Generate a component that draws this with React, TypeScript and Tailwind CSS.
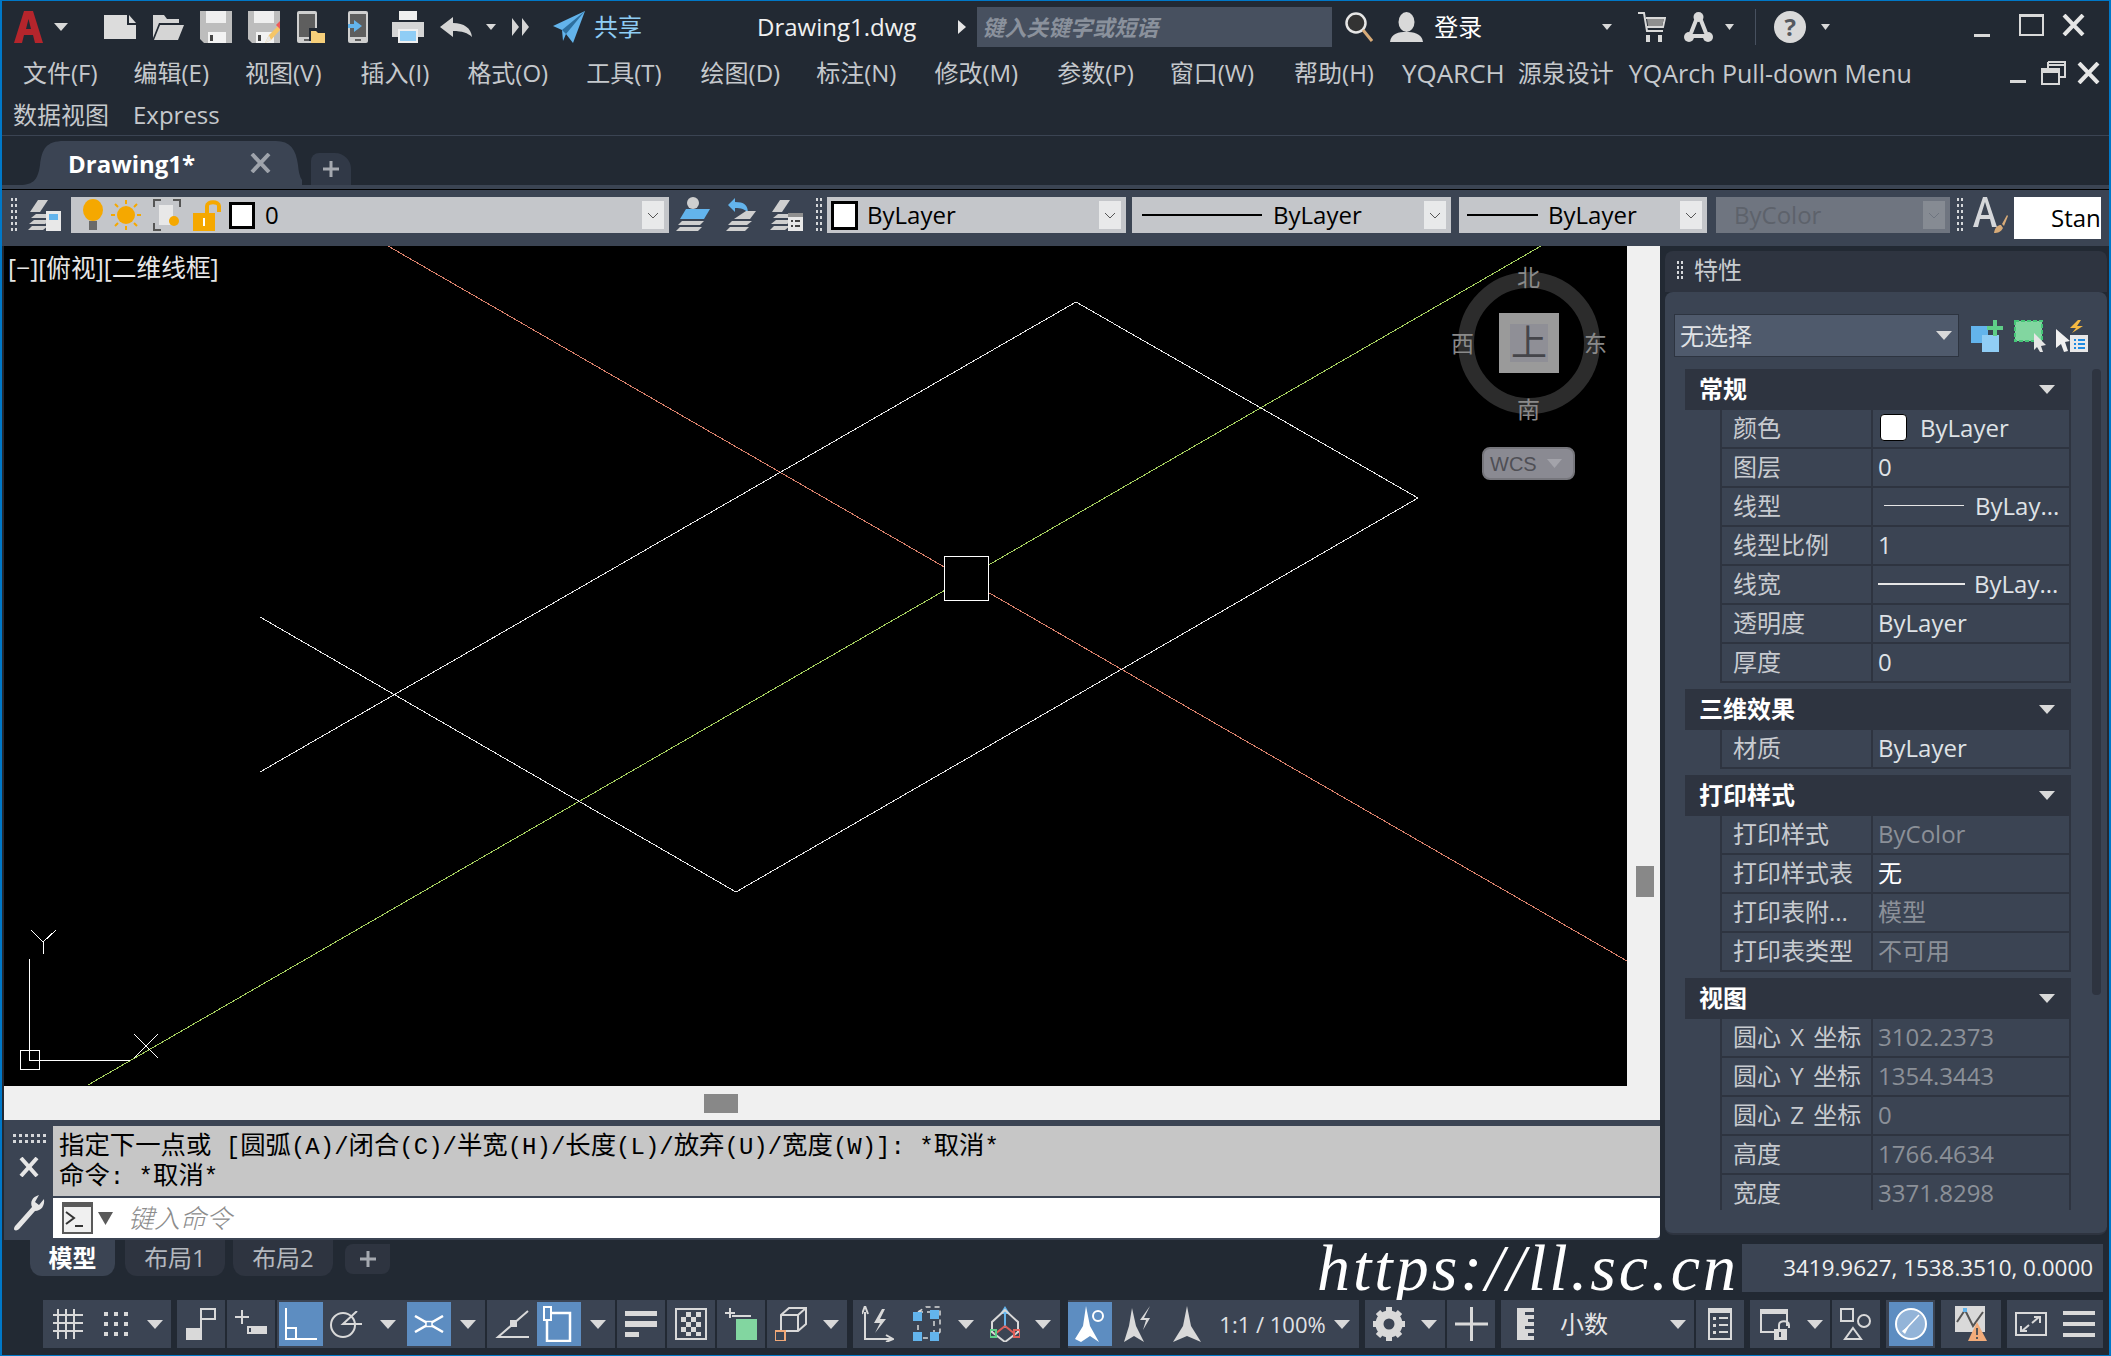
import { ReactNode } from "react";

const LIGHT = "#d9d9d9";

type SvgProps = { w: number; h: number; className?: string; children: ReactNode };

function Svg({ w, h, className, children }: SvgProps) {
  return (
    <svg width={w} height={h} viewBox={`0 0 ${w} ${h}`} className={`shrink-0 ${className ?? ""}`}>
      {children}
    </svg>
  );
}

function Tri({ w = 16, h = 9, color = LIGHT, className }: { w?: number; h?: number; color?: string; className?: string }) {
  return (
    <Svg w={w} h={h} className={className}>
      <polygon points={`0,0 ${w},0 ${w / 2},${h}`} fill={color} />
    </Svg>
  );
}

function Grip({ className }: { className?: string }) {
  const dots = [0, 6, 12, 18, 24, 30];
  return (
    <Svg w={7} h={34} className={className}>
      {dots.map((y) => (
        <g key={y} fill="#d5d7da">
          <rect x={0} y={y} width={2} height={3} />
          <rect x={4} y={y} width={2} height={3} />
        </g>
      ))}
    </Svg>
  );
}

function Floppy({ pencil }: { pencil?: boolean }) {
  return (
    <Svg w={32} h={32}>
      <path d="M0 0H32V32H4L0 28Z" fill="#bdbdbd" />
      <rect x={6} y={0} width={20} height={12} fill="#efefef" />
      <rect x={8} y={21} width={18} height={11} fill="#f2f2f2" />
      <rect x={10} y={24} width={3} height={6} fill="#444" />
      {pencil && (
        <g>
          <path d="M17 32L21 24L30 15L32 19L23 29Z" fill="#f6c667" />
          <path d="M28 14L32 10L32 18Z" fill="#ee5a5a" />
          <path d="M17 32L21 24L23 29Z" fill="#e8e8e8" />
        </g>
      )}
    </Svg>
  );
}

function Phone({ w = 24, children }: { w?: number; children?: ReactNode }) {
  return (
    <Svg w={w} h={32}>
      <rect x={0} y={0} width={20} height={32} rx={2} fill="#cfcfcf" />
      <rect x={2} y={3} width={16} height={23} fill="#5e5e5e" />
      <rect x={7} y={28} width={6} height={2} fill="#5e5e5e" />
      {children}
    </Svg>
  );
}

function LayerStack({ children }: { children?: ReactNode }) {
  return (
    <Svg w={34} h={34}>
      <path d="M10 3H20L12 15H2Z" fill="#cfcfcf" />
      <path d="M8 17H24L19 21H3Z" fill="#cfcfcf" />
      <path d="M6 23H22L17 27H1Z" fill="#cfcfcf" />
      <path d="M4 29H20L15 33H0Z" fill="#cfcfcf" />
      {children}
    </Svg>
  );
}

function Combo({ className, children }: { className: string; children: ReactNode }) {
  return <div className={`relative flex h-9 shrink-0 items-center text-black ${className}`}>{children}</div>;
}

function Dd({ muted }: { muted?: boolean }) {
  return (
    <div className={`ml-auto mr-[5px] flex h-7 w-[22px] items-center justify-center ${muted ? "bg-[#868b93]" : "bg-[#e8e9ea]"}`}>
      <Svg w={12} h={7}>
        <path d="M1 1L6 6L11 1" fill="none" stroke={muted ? "#6f7580" : "#555"} strokeWidth={1} />
      </Svg>
    </div>
  );
}

function Menu({ label, className }: { label: string; className: string }) {
  return <span className={`shrink-0 whitespace-nowrap ${className}`}>{label}</span>;
}

// command line glyphs: the han text sits a bit larger than the mono latin
function CmdLine({ text }: { text: string }) {
  const parts = text.split(/([\u4e00-\u9fff]+)/);
  return (
    <div className="h-[30px] whitespace-pre">
      {parts.map((part, i) => (
        <span key={i} className={i % 2 === 1 ? "text-[25.4px]" : ""}>
          {part}
        </span>
      ))}
    </div>
  );
}

type Row = { label: string; value?: ReactNode; tone?: "on" | "off" | "white" };

function Section({ title, rows }: { title: string; rows: Row[] }) {
  return (
    <div className="mb-[6px] w-[386px]">
      <div className="flex h-[41px] items-center justify-between bg-[#2e3440] pl-[14px] pr-4 text-[24px] font-bold text-white">
        <span className="mb-[2px]">{title}</span>
        <Tri />
      </div>
      {rows.map((row) => (
        <div key={row.label} className="ml-[35px] flex h-[39px] border-x-2 border-b-2 border-[#2e3440] text-[24px] leading-none">
          <div className="flex w-[151px] items-center whitespace-nowrap border-r-2 border-[#2e3440] pb-[2px] pl-[11px] text-[#c8cbd0] [word-spacing:3px]">{row.label}</div>
          <div
            className={`flex flex-1 items-center pb-[2px] pl-[5px] ${
              row.tone === "off" ? "text-[#8b9098]" : row.tone === "white" ? "text-white" : "text-[#dfe2e6]"
            }`}
          >
            {row.value}
          </div>
        </div>
      ))}
    </div>
  );
}

function Slot({ className, children }: { className: string; children?: ReactNode }) {
  return <div className={`flex h-12 shrink-0 items-center justify-center ${className}`}>{children}</div>;
}

function Active({ children }: { children: ReactNode }) {
  return <div className="flex h-11 w-11 shrink-0 items-center justify-center bg-[#5d8dc1]">{children}</div>;
}

function Group({ className, children }: { className: string; children: ReactNode }) {
  return <div className={`flex h-12 shrink-0 items-center bg-[#3b4453] ${className}`}>{children}</div>;
}

function Canvas() {
  return (
    <div className="relative h-[840px] w-[1623px] shrink-0 overflow-hidden bg-black">
      <svg width={1623} height={840} viewBox="4 246 1623 840" shapeRendering="crispEdges" className="block">
        <line x1={388} y1={246} x2={1627} y2={961} stroke="#d9806a" />
        <line x1={1541} y1={246} x2={88} y2={1085} stroke="#a5d05f" />
        <polyline points="260,772 1076,302 1418,498 736,892 260,617" fill="none" stroke="#e6e6e6" />
        <rect x={944.5} y={556.5} width={44} height={44} fill="#000" stroke="#fff" />
        <g fill="none" stroke="#fff">
          <path d="M31 930L43 942L56 930M43 942V954" />
          <path d="M29 959V1060H130" />
          <rect x={20.5} y={1050.5} width={19} height={19} />
          <path d="M134 1034L158 1058M158 1034L134 1058" />
        </g>
      </svg>
      <span className="absolute left-[4px] top-[10px] text-[24.7px] leading-none text-[#e6e6e6]">[−][俯视][二维线框]</span>

      {/* viewcube */}
      <div className="absolute left-[1454px] top-[26px] h-[142px] w-[142px] rounded-full border-[16px] border-[#2c2c2c]" />
      <div className="absolute left-[1495px] top-[67px] flex h-[60px] w-[60px] items-center justify-center bg-[#9a9a9a]">
        <div className="flex h-[38px] w-[38px] items-center justify-center bg-[#8f8f96] text-[36px] leading-none text-[#45454a]">上</div>
      </div>
      <span className="absolute left-[1513px] top-[20px] text-[23px] leading-none text-[#8a8a8a]">北</span>
      <span className="absolute left-[1513px] top-[152px] text-[23px] leading-none text-[#8a8a8a]">南</span>
      <span className="absolute left-[1447px] top-[86px] text-[23px] leading-none text-[#8a8a8a]">西</span>
      <span className="absolute left-[1580px] top-[86px] text-[23px] leading-none text-[#8a8a8a]">东</span>
      <div className="absolute left-[1478px] top-[201px] flex h-[33px] w-[93px] items-center gap-[10px] rounded-lg border-2 border-[#76767c] bg-[#8a8a92] pl-[6px] font-['Liberation_Sans',sans-serif] text-[20px] leading-none text-[#4f4f55]">
        WCS
        <Tri w={15} h={9} color="#a3a3aa" />
      </div>
    </div>
  );
}

export default function App() {
  return (
    <div className="flex h-[1356px] w-[2111px] flex-col overflow-hidden border-x-2 border-y border-x-[#0078c8] border-y-[#0078c8] bg-[#222933] font-['Open_Sans','Noto_Sans_CJK_SC',sans-serif] text-[24px] leading-none text-[#c5c8cc]">
      {/* title bar */}
      <div className="flex h-[54px] shrink-0 items-center pb-[2px]">
        <Svg w={29} h={32} className="ml-[12px]">
          <path d="M0 32L10 0H19L29 32H21L19 24H10L8 32ZM12 18H17L14.5 8Z" fill="#b5252c" fillRule="evenodd" />
        </Svg>
        <Tri w={14} h={8} className="ml-[11px]" />
        <Svg w={32} h={24} className="ml-[36px]">
          <path d="M0 0H23V10H32V24H0Z" fill="#dcdcdc" />
          <path d="M25 0L32 8H25Z" fill="#dcdcdc" />
        </Svg>
        <Svg w={32} h={26} className="ml-4">
          <path d="M1 24V1H12L15 5H27V9H7L1 24Z" fill="#d5d5d5" />
          <path d="M8 11H32L26 26H2Z" fill="#d5d5d5" />
        </Svg>
        <div className="ml-4"><Floppy /></div>
        <div className="ml-4"><Floppy pencil /></div>
        <div className="ml-[17px]">
          <Phone w={30}>
            <rect x={12} y={17} width={18} height={13} fill="#222933" />
            <path d="M14 32V20H19L21 22H28V32Z" fill="#f6cf7a" />
          </Phone>
        </div>
        <div className="ml-[21px]">
          <Phone w={20}>
            <path d="M-6 13H6V9L14 15L6 21V17H-6Z" fill="#63b4ec" />
          </Phone>
        </div>
        <Svg w={32} h={32} className="ml-6">
          <rect x={7} y={0} width={18} height={9} fill="#efefef" />
          <rect x={0} y={11} width={32} height={15} fill="#d5d5d5" />
          <rect x={6} y={18} width={20} height={14} fill="#efefef" />
          <rect x={8} y={20} width={16} height={10} fill="#90cdf5" />
        </Svg>
        <Svg w={32} h={20} className="ml-4">
          <path d="M0 10L13 0V6C24 6 31 11 32 20C28 16 22 14 13 14V20Z" fill="#d5d5d5" />
        </Svg>
        <Tri w={10} h={6} className="ml-[14px]" />
        <Svg w={18} h={18} className="ml-4">
          <path d="M0 0L7 9L0 18ZM10 0L17 9L10 18Z" fill="#d5d5d5" />
        </Svg>
        <Svg w={32} h={32} className="ml-[23px]">
          <path d="M32 0L20 32L13 23L10 30L9 19L0 15Z" fill="#63b4ec" />
          <path d="M32 0L9 19L13 23Z" fill="#2d6f9f" />
        </Svg>
        <span className="ml-[9px] text-[#8fcdf5]">共享</span>
        <span className="ml-[115px] text-[#f0f0f0]">Drawing1.dwg</span>
        <Svg w={8} h={14} className="ml-[42px]">
          <path d="M0 0L8 7L0 14Z" fill="#e6e6e6" />
        </Svg>
        <div className="ml-[11px] flex h-10 w-[355px] items-center bg-[#47505f] pl-[5px] text-[22px] font-bold italic text-[#8a919c]">键入关键字或短语</div>
        <Svg w={28} h={30} className="ml-[13px]">
          <circle cx={11} cy={11} r={9.5} fill="#333" stroke="#e6e6e6" strokeWidth={2.5} />
          <path d="M18 18L27 29" stroke="#d8ab78" strokeWidth={3} />
        </Svg>
        <Svg w={33} h={30} className="ml-[17px]">
          <ellipse cx={16.5} cy={10} rx={8} ry={10} fill={LIGHT} />
          <path d="M0 30C1 21 9 20 16 20S32 21 33 30Z" fill={LIGHT} />
        </Svg>
        <span className="ml-[11px] text-white">登录</span>
        <Tri w={10} h={6} className="ml-[120px]" />
        <Svg w={28} h={30} className="ml-[26px]">
          <path d="M0 1H6L9 19H25M8 6H27L25 15H9" fill="none" stroke={LIGHT} strokeWidth={2} />
          <path d="M9 7H26L24 14H10Z" fill="#8f8f8f" />
          <path d="M8 23H12V30H8ZM20 23H24V30H20Z" fill={LIGHT} />
        </Svg>
        <Svg w={31} h={30} className="ml-[17px]">
          <path d="M15.5 2L8 21M15.5 2L23 21M6 24H25" fill="none" stroke={LIGHT} strokeWidth={4} />
          <circle cx={6} cy={25} r={5} fill={LIGHT} />
          <circle cx={25} cy={25} r={5} fill={LIGHT} />
          <circle cx={15.5} cy={5} r={5} fill={LIGHT} />
        </Svg>
        <Tri w={9} h={6} className="ml-[11px]" />
        <div className="ml-[21px] h-9 w-px bg-[#47505f]" />
        <div className="ml-[18px] flex h-8 w-8 items-center justify-center rounded-full bg-[#d9d9d9] text-[24px] font-bold text-[#55585e]">?</div>
        <Tri w={9} h={6} className="ml-[15px]" />
        <div className="ml-[144px] mt-[16px] h-[3px] w-4 bg-[#d9d9d9]" />
        <div className="ml-[29px] mt-[-4px] h-[22px] w-[25px] border-2 border-t-[3px] border-[#d9d9d9]" />
        <Svg w={23} h={22} className="ml-[18px] mt-[-4px]">
          <path d="M2 1L21 21M21 1L2 21" stroke="#e6e6e6" strokeWidth={4} />
        </Svg>
      </div>

      {/* menus */}
      <div className="flex h-10 shrink-0 items-center pb-[4px]">
        <Menu label="文件(F)" className="ml-[21px]" />
        <Menu label="编辑(E)" className="ml-[36px]" />
        <Menu label="视图(V)" className="ml-[36px]" />
        <Menu label="插入(I)" className="ml-[39px]" />
        <Menu label="格式(O)" className="ml-[38px]" />
        <Menu label="工具(T)" className="ml-[38px]" />
        <Menu label="绘图(D)" className="ml-[39px]" />
        <Menu label="标注(N)" className="ml-[36px]" />
        <Menu label="修改(M)" className="ml-[38px]" />
        <Menu label="参数(P)" className="ml-[39px]" />
        <Menu label="窗口(W)" className="ml-[36px]" />
        <Menu label="帮助(H)" className="ml-10" />
        <Menu label="YQARCH" className="ml-[28px] text-[26px]" />
        <Menu label="源泉设计" className="ml-[13px]" />
        <Menu label="YQArch Pull-down Menu" className="ml-[15px] text-[25px]" />
        <div className="ml-auto flex items-center">
          <div className="mt-[16px] h-[3px] w-4 bg-[#d9d9d9]" />
          <Svg w={25} h={24} className="ml-[15px]">
            <path d="M7 1H24V16H18M7 1V7M7 4H24" fill="none" stroke="#d9d9d9" strokeWidth={2} />
            <rect x={1} y={8} width={17} height={15} fill="none" stroke="#d9d9d9" strokeWidth={2} />
            <rect x={1} y={8} width={17} height={4} fill="#d9d9d9" />
          </Svg>
          <Svg w={23} h={22} className="ml-[11px] mr-[9px]">
            <path d="M2 1L21 21M21 1L2 21" stroke="#e6e6e6" strokeWidth={4} />
          </Svg>
        </div>
      </div>
      <div className="flex h-10 shrink-0 items-center">
        <span className="ml-[11px]">数据视图</span>
        <span className="ml-6">Express</span>
      </div>
      <div className="h-px shrink-0 bg-[#3b4453]" />

      {/* file tabs */}
      <div className="flex h-[49px] shrink-0 items-end">
        <div className="relative ml-[18px] flex h-11 w-[282px] items-center">
          <svg width={282} height={44} viewBox="0 0 282 44" className="absolute inset-0">
            <path d="M0 44C14 44 18 38 20 24C22 8 26 0 44 0H256C270 0 276 8 278 24C279 36 282 44 292 44Z" fill="#3b4453" />
          </svg>
          <span className="relative ml-[48px] mt-[2px] font-bold text-white">Drawing1*</span>
          <Svg w={21} h={20} className="relative ml-[55px]">
            <path d="M2 1L19 19M19 1L2 19" stroke="#9ea3ab" strokeWidth={4} />
          </Svg>
        </div>
        <div className="ml-[9px] flex h-8 w-[40px] items-center justify-center rounded-tr-2xl rounded-tl-lg bg-[#313947]">
          <Svg w={16} h={16}>
            <path d="M8 0V16M0 8H16" stroke="#a5a9b0" strokeWidth={3} />
          </Svg>
        </div>
      </div>
      <div className="h-1 shrink-0 bg-[#3b4453]" />
      <div className="h-px shrink-0 bg-black" />

      {/* toolbar */}
      <div className="flex h-14 shrink-0 items-start bg-[#3b4453] pt-[7px]">
        <Grip className="ml-[9px] mt-[1px]" />
        <div className="ml-[10px]">
          <LayerStack>
            <rect x={18} y={14} width={15} height={20} fill="#e8e8e8" />
            <rect x={21} y={17} width={9} height={6} fill="#63b4ec" />
          </LayerStack>
        </div>
        <Combo className="ml-[9px] w-[598px] bg-[#c4c6ca]">
          <Svg w={20} h={32} className="ml-[12px]">
            <ellipse cx={10} cy={11} rx={10} ry={11} fill="#f5a800" />
            <rect x={6} y={22} width={8} height={9} fill="#6a6a6a" />
          </Svg>
          <Svg w={30} h={30} className="ml-2">
            <circle cx={15} cy={15} r={9} fill="#f5a800" />
            <path d="M15 0V4M15 26V30M0 15H4M26 15H30M4 4L7 7M23 23L26 26M26 4L23 7M7 23L4 26" stroke="#f5a800" strokeWidth={2} />
          </Svg>
          <Svg w={28} h={32} className="ml-3">
            <path d="M1 8V1H8M20 1H27V8M1 24V31H8" fill="none" stroke="#555" strokeWidth={2} />
            <rect x={6} y={6} width={14} height={20} fill="#e8e8e8" />
            <circle cx={21} cy={22} r={5} fill="#f5a800" />
          </Svg>
          <Svg w={30} h={32} className="ml-3">
            <path d="M14 14V7C14 2 26 2 26 7V13" fill="none" stroke="#f5a800" strokeWidth={4} />
            <rect x={0} y={14} width={22} height={18} fill="#f5a800" />
            <rect x={10} y={19} width={2} height={8} fill="#fff" />
          </Svg>
          <div className="ml-[6px] h-[27px] w-[26px] border-[3px] border-black bg-white" />
          <span className="ml-[10px]">0</span>
          <Dd />
        </Combo>
        <div className="ml-[7px]">
          <Svg w={34} h={34}>
            <circle cx={17} cy={6} r={6} fill="#cfcfcf" />
            <path d="M4 22L10 12H34L28 22Z" fill="#63b4ec" />
            <path d="M6 24H28L24 28H2ZM4 30H26L22 34H0Z" fill="#cfcfcf" />
          </Svg>
        </div>
        <div className="ml-[14px]">
          <Svg w={33} h={34}>
            <path d="M4 8L11 1V5C20 5 24 8 24 16C21 12 17 11 11 11V15Z" fill="#63b4ec" />
            <path d="M22 14H32L26 22H10ZM8 24H28L23 28H4ZM6 30H25L21 34H2Z" fill="#cfcfcf" />
          </Svg>
        </div>
        <div className="ml-[13px]">
          <LayerStack>
            <rect x={18} y={16} width={15} height={18} fill="#e8e8e8" />
            <rect x={18} y={16} width={15} height={4} fill="#8f8f8f" />
            <path d="M21 23H23V25H21ZM25 23H30V25H25ZM21 28H23V30H21ZM25 28H30V30H25Z" fill="#444" />
          </LayerStack>
        </div>
        <Grip className="ml-[12px] mt-[1px]" />
        <Combo className="ml-[4px] w-[299px] bg-[#c4c6ca]">
          <div className="ml-[4px] h-[29px] w-[27px] border-[3px] border-black bg-white" />
          <span className="ml-[9px]">ByLayer</span>
          <Dd />
        </Combo>
        <Combo className="ml-[6px] w-[319px] bg-[#c4c6ca]">
          <div className="ml-[10px] h-[2px] w-[120px] bg-black" />
          <span className="ml-[11px]">ByLayer</span>
          <Dd />
        </Combo>
        <Combo className="ml-2 w-[248px] bg-[#c4c6ca]">
          <div className="ml-2 h-[2px] w-[71px] bg-black" />
          <span className="ml-[10px]">ByLayer</span>
          <Dd />
        </Combo>
        <Combo className="ml-[9px] w-[234px] bg-[#6f7580]">
          <span className="ml-[18px] text-[#5d626b]">ByColor</span>
          <Dd muted />
        </Combo>
        <Grip className="ml-[7px] mt-[1px]" />
        <Svg w={42} h={36} className="ml-[9px]">
          <path d="M0 30L10 0H14L24 30H19L17 22H7L5 30ZM8 18H16L12 5Z" fill="#d5d7da" fillRule="evenodd" />
          <path d="M21 36C22 30 25 28 28 28L30 31C28 35 25 36 21 36ZM29 27L34 18L35 19L31 29Z" fill="#d8ab78" />
        </Svg>
        <div className="ml-[-1px] flex h-[42px] w-[87px] items-center overflow-hidden bg-white pl-[37px] text-black">Stan</div>
      </div>

      {/* main */}
      <div className="flex h-[994px] shrink-0">
        <div className="flex w-[1658px] shrink-0 flex-col pl-[2px]">
          <div className="flex h-[840px] shrink-0">
            <Canvas />
            <div className="flex flex-1 items-start bg-[#f0f0f0] pl-[9px] pt-[620px]">
              <div className="h-[31px] w-[18px] bg-[#888]" />
            </div>
          </div>
          <div className="flex h-[34px] shrink-0 items-center bg-[#f0f0f0] pl-[700px]">
            <div className="h-[19px] w-[34px] bg-[#888]" />
          </div>
          <div className="flex h-[120px] shrink-0 bg-[#3b4453] pt-[6px]">
            <div className="flex w-[49px] shrink-0 flex-col items-center pt-[8px]">
              <Svg w={36} h={10}>
                <path d="M2 0h3v3h-3zM8 0h3v3h-3zM14 0h3v3h-3zM20 0h3v3h-3zM26 0h3v3h-3zM32 0h3v3h-3zM2 6h3v3h-3zM8 6h3v3h-3zM14 6h3v3h-3zM20 6h3v3h-3zM26 6h3v3h-3zM32 6h3v3h-3z" fill="#d5d7da" />
              </Svg>
              <Svg w={20} h={20} className="mt-[13px]">
                <path d="M2 1L18 19M18 1L2 19" stroke="#e6e6e6" strokeWidth={4} />
              </Svg>
              <Svg w={32} h={36} className="mt-[18px]">
                <path d="M1 34C1 32 2 31 3 30L19 12C17 7 19 2 26 0L22 7L26 10L31 4C32 11 28 16 22 16L7 33C5 36 1 36 1 34Z" fill="#e6e6e6" />
              </Svg>
            </div>
            <div className="flex flex-1 flex-col">
              <div className="h-[70px] bg-[#c6c6c6] pl-[6px] pt-[7px] font-['Liberation_Mono','Noto_Sans_CJK_SC',monospace] text-[24px] leading-[30px] text-black">
                <CmdLine text="指定下一点或 [圆弧(A)/闭合(C)/半宽(H)/长度(L)/放弃(U)/宽度(W)]: *取消*" />
                <CmdLine text="命令: *取消*" />
              </div>
              <div className="mt-[2px] flex h-10 items-center rounded-br bg-white pl-[9px]">
                <Svg w={32} h={32}>
                  <rect x={0} y={0} width={31} height={32} fill="#5a5a5a" />
                  <rect x={2} y={5} width={27} height={25} fill="#f0f0f0" />
                  <path d="M4 10L12 16L4 22" fill="none" stroke="#333" strokeWidth={2} />
                  <path d="M13 24H21" stroke="#333" strokeWidth={2} />
                </Svg>
                <Tri w={15} h={13} color="#5a5a5a" className="ml-[4px]" />
                <span className="ml-[15px] text-[26px] font-light italic text-[#8c8c8c]">键入命令</span>
              </div>
            </div>
          </div>
        </div>

        {/* properties */}
        <div className="ml-[5px] mt-[5px] flex h-[984px] w-[442px] shrink-0 flex-col">
          <div className="flex h-[41px] shrink-0 items-center rounded-t-lg bg-[#2e3440] pb-[4px] pl-[12px]">
            <Svg w={7} h={18}>
              <path d="M0 0h2v3h-2zM4 0h2v3h-2zM0 5h2v3h-2zM4 5h2v3h-2zM0 10h2v3h-2zM4 10h2v3h-2zM0 15h2v3h-2zM4 15h2v3h-2z" fill="#d5d7da" />
            </Svg>
            <span className="ml-[10px] text-[#c9ccd0]">特性</span>
          </div>
          <div className="flex h-[943px] flex-col rounded-lg border-b-2 border-[#2e3440] bg-[#3b4453] pt-[22px]">
            <div className="flex h-[43px] shrink-0 items-center pl-[9px]">
              <div className="flex h-[43px] w-[285px] items-center justify-between border border-[#2d3440] bg-[#4f5a6c] pl-[5px] pr-[6px] text-[#e0e2e5]">
                无选择
                <Tri />
              </div>
              <Svg w={33} h={32} className="ml-3">
                <rect x={0} y={6} width={17} height={17} fill="#63b4ec" />
                <rect x={11} y={15} width={17} height={17} fill="#90cdf5" />
                <path d="M24 0V16M16 8H32" stroke="#5fce88" strokeWidth={4} />
              </Svg>
              <Svg w={32} h={32} className="ml-[10px]">
                <rect x={1} y={1} width={27} height={20} fill="#82d6a0" stroke="#46c678" strokeWidth={2} strokeDasharray="4 2" />
                <path d="M20 13L32 25L27 26L29 32H26L23 27L20 30Z" fill="#e6e6e6" />
              </Svg>
              <Svg w={32} h={32} className="ml-[10px]">
                <path d="M0 9L14 21L9 22L12 31L8 32L5 24L0 28Z" fill="#f0f0f0" />
                <path d="M22 0L14 8H20L16 13L27 6H21L25 0Z" fill="#f5b942" />
                <rect x={14} y={15} width={18} height={17} fill="#e8e8e8" />
                <path d="M18 19h2v2h-2zM22 19h7v2h-7zM18 23h2v2h-2zM22 23h7v2h-7zM18 27h2v2h-2zM22 27h7v2h-7z" fill="#1d8ae0" />
              </Svg>
            </div>
            <div className="mt-3 flex h-[841px] overflow-hidden pl-5">
              <div className="w-[386px]">
                <Section
                  title="常规"
                  rows={[
                    {
                      label: "颜色",
                      value: (
                        <>
                          <span className="ml-[2px] h-[27px] w-[27px] rounded-sm border border-black bg-white" />
                          <span className="ml-[13px]">ByLayer</span>
                        </>
                      ),
                    },
                    { label: "图层", value: "0" },
                    {
                      label: "线型",
                      value: (
                        <>
                          <span className="ml-[6px] h-px w-[80px] shrink-0 bg-[#e6e6e6]" />
                          <span className="ml-[11px] whitespace-nowrap">ByLay...</span>
                        </>
                      ),
                    },
                    { label: "线型比例", value: "1" },
                    {
                      label: "线宽",
                      value: (
                        <>
                          <span className="h-[2px] w-[87px] shrink-0 bg-[#e6e6e6]" />
                          <span className="ml-[9px] whitespace-nowrap">ByLay...</span>
                        </>
                      ),
                    },
                    { label: "透明度", value: "ByLayer" },
                    { label: "厚度", value: "0" },
                  ]}
                />
                <Section title="三维效果" rows={[{ label: "材质", value: "ByLayer" }]} />
                <Section
                  title="打印样式"
                  rows={[
                    { label: "打印样式", value: "ByColor", tone: "off" },
                    { label: "打印样式表", value: "无", tone: "white" },
                    { label: "打印表附...", value: "模型", tone: "off" },
                    { label: "打印表类型", value: "不可用", tone: "off" },
                  ]}
                />
                <Section
                  title="视图"
                  rows={[
                    { label: "圆心 X 坐标", value: "3102.2373", tone: "off" },
                    { label: "圆心 Y 坐标", value: "1354.3443", tone: "off" },
                    { label: "圆心 Z 坐标", value: "0", tone: "off" },
                    { label: "高度", value: "1766.4634", tone: "off" },
                    { label: "宽度", value: "3371.8298", tone: "off" },
                  ]}
                />
              </div>
              <div className="ml-[21px] h-[626px] w-[9px] rounded bg-[#2e3440]" />
            </div>
          </div>
        </div>
      </div>

      {/* layout tabs, coordinates */}
      <div className="flex h-[60px] shrink-0 items-start">
        <div className="ml-[28px] flex h-9 w-[85px] items-center justify-center rounded-b-xl bg-[#3b4453] font-bold text-white">模型</div>
        <div className="ml-[10px] flex h-9 w-[100px] items-center justify-center rounded-b-xl bg-[#2e3440] text-[#b4b8be]">布局1</div>
        <div className="ml-2 flex h-9 w-[100px] items-center justify-center rounded-b-xl bg-[#2e3440] text-[#b4b8be]">布局2</div>
        <div className="ml-3 mt-1 flex h-[30px] w-[45px] items-center justify-center rounded-b-lg rounded-tl-lg bg-[#2e3440]">
          <Svg w={16} h={16}>
            <path d="M8 0V16M0 8H16" stroke="#a5a9b0" strokeWidth={3} />
          </Svg>
        </div>
        <span className="ml-[927px] mt-[-8px] whitespace-nowrap font-['Liberation_Serif',serif] text-[66px] italic leading-[72px] tracking-[3px] text-white">https://ll.sc.cn</span>
        <div className="ml-auto mr-[6px] mt-1 flex h-12 w-[361px] shrink-0 items-center justify-end bg-[#3b4453] pr-[10px] text-[22.4px] text-[#f0f0f0]">3419.9627, 1538.3510, 0.0000</div>
      </div>

      {/* status bar */}
      <div className="flex h-12 shrink-0">
        <Group className="ml-[41px] w-[128px]">
          <Slot className="w-[50px]">
            <Svg w={30} h={30}>
              <path d="M5 0V30M13 0V30M21 0V30M0 6H30M0 14H30M0 22H30" stroke={LIGHT} strokeWidth={2} />
            </Svg>
          </Slot>
          <Slot className="w-[46px]">
            <Svg w={24} h={24}>
              <path d="M0 0h4v4h-4zM10 0h4v4h-4zM20 0h4v4h-4zM0 10h4v4h-4zM10 10h4v4h-4zM20 10h4v4h-4zM0 20h4v4h-4zM10 20h4v4h-4zM20 20h4v4h-4z" fill={LIGHT} />
            </Svg>
          </Slot>
          <Slot className="w-8"><Tri /></Slot>
        </Group>
        <Group className="ml-[6px] w-12 justify-center">
          <Svg w={30} h={32}>
            <path d="M0 20H16V32H0Z" fill={LIGHT} />
            <path d="M15 20V1H29V11H15" fill="none" stroke={LIGHT} strokeWidth={2} />
          </Svg>
        </Group>
        <Group className="ml-[2px] w-12 justify-center">
          <Svg w={32} h={28}>
            <path d="M7 0V14M0 7H14" stroke={LIGHT} strokeWidth={2} />
            <rect x={12} y={16} width={20} height={8} fill={LIGHT} />
            <rect x={14} y={18} width={2} height={4} fill="#3b4453" />
          </Svg>
        </Group>
        <Group className="ml-[2px] w-[208px] pl-[2px]">
          <Active>
            <Svg w={32} h={32}>
              <path d="M1 0V31H32M1 20H11V31" fill="none" stroke="#fff" strokeWidth={2} />
            </Svg>
          </Active>
          <Slot className="w-[46px]">
            <Svg w={32} h={27}>
              <circle cx={13} cy={14} r={12} fill="none" stroke={LIGHT} strokeWidth={2} />
              <path d="M27 0L13 13H32" fill="none" stroke={LIGHT} strokeWidth={2} />
            </Svg>
          </Slot>
          <Slot className="w-[38px]"><Tri /></Slot>
          <Active>
            <Svg w={30} h={18}>
              <path d="M1 1L29 17M1 17L29 1" stroke="#fff" strokeWidth={2.5} />
              <rect x={12} y={6.5} width={6} height={5} fill="#5d8dc1" stroke="#fff" strokeWidth={1.5} />
            </Svg>
          </Active>
          <Slot className="w-[34px]"><Tri /></Slot>
        </Group>
        <Group className="ml-[2px] w-[128px]">
          <Slot className="w-[50px]">
            <Svg w={34} h={28}>
              <path d="M33 1L3 27H34" fill="none" stroke={LIGHT} strokeWidth={2} />
              <rect x={15} y={10} width={7} height={7} fill={LIGHT} />
            </Svg>
          </Slot>
          <Active>
            <Svg w={32} h={36}>
              <path d="M8 7H27V35H4V14" fill="none" stroke="#fff" strokeWidth={2.5} />
              <rect x={1} y={1} width={7} height={13} fill="none" stroke="#fff" strokeWidth={2} />
            </Svg>
          </Active>
          <Slot className="w-[34px]"><Tri /></Slot>
        </Group>
        <Group className="ml-[2px] w-12 justify-center">
          <Svg w={32} h={26}>
            <path d="M0 0H32V5H0ZM0 10H32V16H0ZM0 21H14V26H0Z" fill={LIGHT} />
          </Svg>
        </Group>
        <Group className="ml-[2px] w-12 justify-center">
          <Svg w={32} h={32}>
            <rect x={1} y={1} width={30} height={30} fill="none" stroke={LIGHT} strokeWidth={2} />
            <path d="M11 4h5v5h-5zM21 4h5v5h-5zM6 9h5v5h-5zM16 9h5v5h-5zM11 14h5v5h-5zM21 14h5v5h-5zM6 19h5v5h-5zM16 19h5v5h-5zM11 24h5v4h-5zM21 24h5v4h-5z" fill={LIGHT} />
          </Svg>
        </Group>
        <Group className="ml-[2px] w-12 justify-center">
          <Svg w={32} h={32}>
            <path d="M5 0V10M0 5H10" stroke={LIGHT} strokeWidth={2} />
            <path d="M7 8H26" stroke={LIGHT} strokeWidth={2} />
            <rect x={11} y={11} width={21} height={21} fill="#82d6a0" />
          </Svg>
        </Group>
        <Group className="ml-[2px] w-20">
          <Slot className="w-12">
            <Svg w={32} h={34}>
              <path d="M6 24V8L14 1H31V17L23 24H10M6 8H23V24M23 8L31 1" fill="none" stroke={LIGHT} strokeWidth={2} />
              <rect x={0} y={24} width={10} height={10} fill="none" stroke="#f0a878" strokeWidth={2} />
            </Svg>
          </Slot>
          <Slot className="w-8"><Tri /></Slot>
        </Group>
        <Group className="ml-[6px] w-[207px]">
          <Slot className="w-[50px]">
            <Svg w={32} h={36}>
              <path d="M3 34V6M0 8L3 0L6 8M3 33H30M24 29L31 33L24 36" fill="none" stroke={LIGHT} strokeWidth={2} />
              <path d="M20 3L12 17H18L13 27L24 13H18L23 3Z" fill={LIGHT} />
            </Svg>
          </Slot>
          <Slot className="w-[45px]">
            <Svg w={32} h={36}>
              <path d="M8 6L16 1H30V26L24 32H8ZM24 6V32M8 6H24" fill="none" stroke={LIGHT} strokeWidth={1.5} strokeDasharray="5 4" />
              <path d="M3 6h9v9h-9zM20 4h9v9h-9zM3 26h9v9h-9zM20 26h9v9h-9z" fill="#63b4ec" />
            </Svg>
          </Slot>
          <Slot className="w-9"><Tri /></Slot>
          <Slot className="w-[42px]">
            <Svg w={30} h={36}>
              <path d="M15 8V22" stroke="#63b4ec" strokeWidth={2} />
              <path d="M15 0L20 8H10Z" fill="#63b4ec" />
              <path d="M15 4L2 16V26L15 36L28 26V16Z" fill="none" stroke={LIGHT} strokeWidth={2} />
              <path d="M15 20L5 28M15 20L25 28" stroke="#e0605a" strokeWidth={2} />
              <rect x={0} y={24} width={6} height={7} fill="none" stroke="#5fce88" strokeWidth={2} />
              <rect x={24} y={24} width={6} height={7} fill="none" stroke="#e0605a" strokeWidth={2} />
            </Svg>
          </Slot>
          <Slot className="w-[34px]"><Tri /></Slot>
        </Group>
        <Group className="ml-2 w-[291px]">
          <Active>
            <Svg w={30} h={36}>
              <path d="M11 0L15 20L24 36L15 30L6 36L0 33L8 20Z" fill="#fff" />
              <circle cx={23} cy={10} r={5} fill="none" stroke="#fff" strokeWidth={2} />
            </Svg>
          </Active>
          <Slot className="w-[50px]">
            <Svg w={34} h={36}>
              <path d="M12 2L16 20L24 36L14 30L4 36L9 20Z" fill={LIGHT} />
              <path d="M30 0L24 12H30L23 24L26 14H20Z" fill={LIGHT} />
            </Svg>
          </Slot>
          <Slot className="w-[49px]">
            <Svg w={28} h={36}>
              <path d="M14 0L18 20L28 36L14 30L0 36L10 20Z" fill={LIGHT} />
            </Svg>
          </Slot>
          <Slot className="w-[123px] text-[22px] text-[#e0e2e5]">1:1 / 100%</Slot>
          <Slot className="w-6"><Tri className="mr-[8px]" /></Slot>
        </Group>
        <Group className="ml-[6px] w-20">
          <Slot className="w-12">
            <Svg w={32} h={34}>
              <circle cx={16} cy={17} r={9.5} fill="none" stroke={LIGHT} strokeWidth={8} />
              <path d="M16 0V34M0 17H32M5 5L27 29M27 5L5 29" stroke={LIGHT} strokeWidth={6} strokeDasharray="5 24" />
            </Svg>
          </Slot>
          <Slot className="w-8"><Tri /></Slot>
        </Group>
        <Group className="ml-[2px] w-12 justify-center">
          <Svg w={33} h={34}>
            <path d="M16.5 0V34M0 17H33" stroke={LIGHT} strokeWidth={3} />
          </Svg>
        </Group>
        <Group className="ml-[6px] w-[193px]">
          <Slot className="w-[49px]">
            <Svg w={17} h={32}>
              <path d="M0 0H17V4H8V7H17V11H11V14H17V18H8V21H17V25H11V28H17V32H0Z" fill={LIGHT} />
            </Svg>
          </Slot>
          <span className="ml-[10px] text-[#e6e6e6]">小数</span>
          <Slot className="ml-auto w-8"><Tri /></Slot>
        </Group>
        <Group className="ml-[2px] w-12 justify-center">
          <Svg w={24} h={32}>
            <rect x={1} y={1} width={22} height={30} fill="none" stroke={LIGHT} strokeWidth={2} />
            <path d="M1 1H23V5H1ZM5 9h3v3h-3zM11 9h9v2h-9zM5 16h3v3h-3zM11 16h9v2h-9zM5 23h3v3h-3zM11 23h9v2h-9z" fill={LIGHT} />
          </Svg>
        </Group>
        <Group className="ml-[6px] w-20">
          <Slot className="w-[49px]">
            <Svg w={32} h={32}>
              <path d="M16 24H2V2H28V18" fill="none" stroke={LIGHT} strokeWidth={2} />
              <path d="M2 2H28V6H2Z" fill={LIGHT} />
              <rect x={15} y={21} width={13} height={11} fill={LIGHT} />
              <path d="M20 21V17C20 12 30 12 30 17V20" fill="none" stroke={LIGHT} strokeWidth={2} />
              <rect x={20} y={24} width={2} height={5} fill="#3b4453" />
            </Svg>
          </Slot>
          <Slot className="w-[31px]"><Tri /></Slot>
        </Group>
        <Group className="ml-[2px] w-12 justify-center">
          <Svg w={32} h={32}>
            <rect x={1} y={1} width={12} height={12} fill="none" stroke={LIGHT} strokeWidth={2} />
            <circle cx={24} cy={13} r={6} fill="none" stroke={LIGHT} strokeWidth={2} />
            <path d="M13 20L21 31H5Z" fill="none" stroke={LIGHT} strokeWidth={2} />
          </Svg>
        </Group>
        <Group className="ml-[6px] w-[49px] justify-center">
          <div className="flex h-11 w-11 items-center justify-center bg-[#5d8dc1]">
            <Svg w={32} h={32}>
              <circle cx={16} cy={16} r={15} fill="#93b4d8" stroke="#fff" strokeWidth={2} />
              <path d="M8 24L24 7" stroke="#fff" strokeWidth={1.5} />
              <path d="M7 23L14 18L10 26Z" fill="#fff" />
            </Svg>
          </div>
        </Group>
        <Group className="ml-[6px] w-[60px] justify-center">
          <Svg w={32} h={36}>
            <rect x={0} y={0} width={30} height={26} fill={LIGHT} />
            <path d="M2 16L10 4L18 20L28 6" fill="none" stroke="#555" strokeWidth={2} />
            <rect x={8} y={2} width={4} height={4} fill="#63b4ec" />
            <path d="M22 16L32 35H13Z" fill="#f2ac7a" />
            <path d="M22 22V29M22 31V33" stroke="#555" strokeWidth={2} />
          </Svg>
        </Group>
        <Group className="ml-[6px] w-24 justify-between pl-2 pr-2">
          <Svg w={32} h={24}>
            <rect x={1} y={1} width={30} height={22} fill="none" stroke={LIGHT} strokeWidth={2} />
            <path d="M17 11L24 5M19 5H25V11M14 13L7 19M6 14V19H12" fill="none" stroke={LIGHT} strokeWidth={2} />
          </Svg>
          <Svg w={32} h={26}>
            <path d="M0 0H32V4H0ZM0 11H32V15H0ZM0 22H32V26H0Z" fill={LIGHT} />
          </Svg>
        </Group>
      </div>
    </div>
  );
}
